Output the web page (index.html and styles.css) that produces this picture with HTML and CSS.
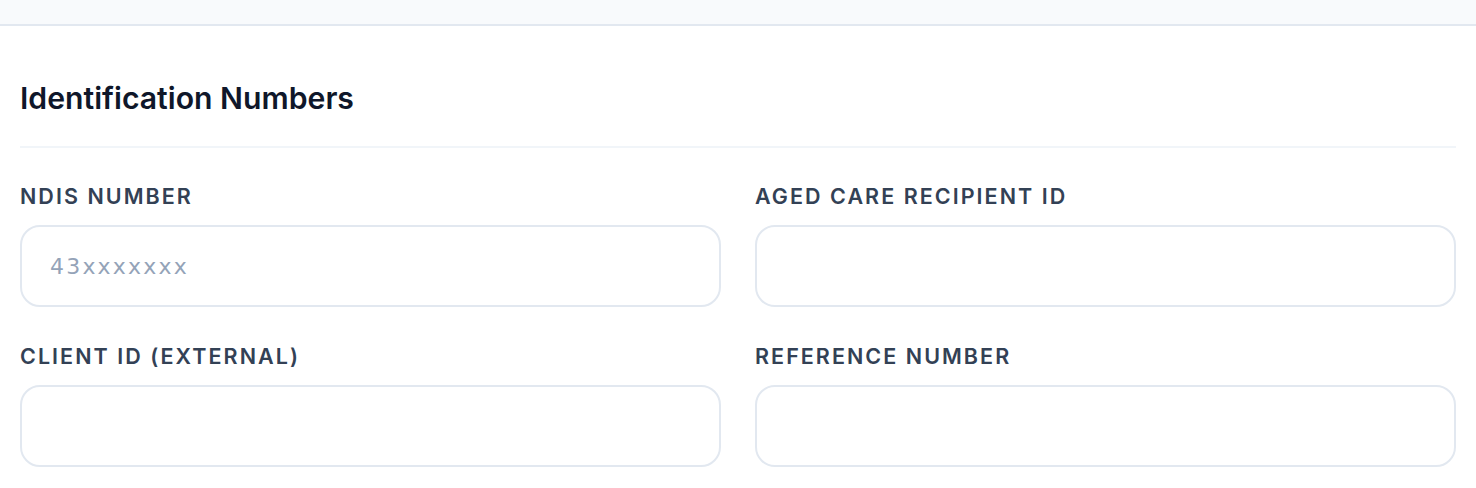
FILE: index.html
```html
<!DOCTYPE html>
<html lang="en">
<head>
<meta charset="utf-8">
<title>Identification Numbers</title>
<link rel="stylesheet" href="styles.css">
</head>
<body>
<div class="topbar"></div>
<section class="section">
  <h2 class="section-title">Identification Numbers</h2>
  <div class="grid">
    <div class="field">
      <label class="label" for="ndis">NDIS Number</label>
      <input class="input" id="ndis" type="text" placeholder="43xxxxxxx">
    </div>
    <div class="field">
      <label class="label" for="aged">Aged Care Recipient ID</label>
      <input class="input" id="aged" type="text">
    </div>
    <div class="field">
      <label class="label" for="client">Client ID (External)</label>
      <input class="input" id="client" type="text">
    </div>
    <div class="field">
      <label class="label" for="ref">Reference Number</label>
      <input class="input" id="ref" type="text">
    </div>
  </div>
</section>
</body>
</html>
```
FILE: styles.css
```css
* { box-sizing: border-box; }
html, body { margin: 0; padding: 0; background: #ffffff; }
body { font-family: Inter, "Liberation Sans", sans-serif; color: #0f172a; }

.topbar {
  height: 26px;
  background: #f8fafc;
  border-bottom: 2px solid #e2e8f0;
}

.section { padding: 0 20px; }

.section-title {
  margin: 0;
  padding-top: 54px;
  padding-bottom: 30px;
  font-size: 30.2px;
  line-height: 36px;
  font-weight: 600;
  color: #0f172a;
  letter-spacing: 0;
  border-bottom: 2px solid #f1f5f9;
}

.grid {
  display: grid;
  grid-template-columns: 1fr 1fr;
  column-gap: 34px;
  row-gap: 35px;
  margin-top: 34px;
}

.field { display: flex; flex-direction: column; gap: 15px; }

.label {
  font-size: 21.5px;
  line-height: 28px;
  font-weight: 600;
  text-transform: uppercase;
  letter-spacing: 0.095em;
  color: #334155;
}

.input {
  height: 82px;
  width: 100%;
  border: 2px solid #e2e8f0;
  border-radius: 20px;
  background: #ffffff;
  padding: 0 28px;
  font-family: "DejaVu Sans", sans-serif;
  font-size: 22px;
  letter-spacing: 0.1em;
  color: #0f172a;
  outline: none;
}
.input::placeholder { color: #94a3b8; }
```
